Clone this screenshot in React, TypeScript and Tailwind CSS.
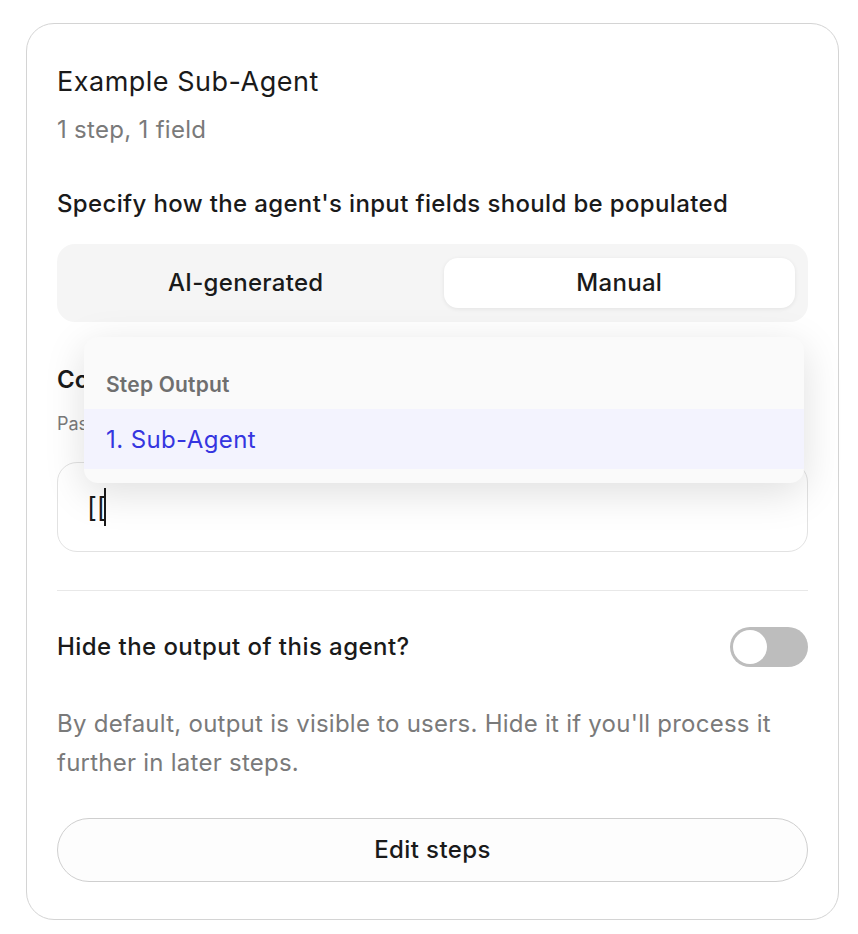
import { useState } from 'react';

export default function App() {
  const [mode, setMode] = useState<'ai' | 'manual'>('manual');
  const [hidden, setHidden] = useState(false);

  return (
    <div className="min-h-screen bg-white pl-[26px] pt-[23px] font-['Inter',sans-serif] text-[#1a1a1a]">
      <div className="w-[813px] rounded-[28px] border border-[#d4d4d4] px-[30px] pb-[37px] pt-[42px]">
        <h2 className="text-[27px] leading-[32px] font-normal tracking-[0.5px]">Example Sub-Agent</h2>
        <p className="mt-[18px] text-[24px] leading-[28px] tracking-[0.3px] text-[#7a7a7a]">1 step, 1 field</p>

        <p className="mt-[46px] text-[24px] leading-[28px] font-medium tracking-[0.35px]">
          Specify how the agent's input fields should be populated
        </p>

        <div className="mt-[26px] flex gap-[22px] rounded-[18px] bg-[#f5f5f5] px-[13px] py-[14px]">
          {[
            { id: 'ai' as const, label: 'AI-generated' },
            { id: 'manual' as const, label: 'Manual' },
          ].map(({ id, label }) => (
            <button
              key={id}
              type="button"
              onClick={() => setMode(id)}
              className={
                mode === id
                  ? 'h-[50px] flex-1 rounded-[14px] bg-white text-[24px] font-medium tracking-[0.3px] shadow-[0_1px_4px_rgba(0,0,0,0.08)]'
                  : 'h-[50px] flex-1 rounded-[14px] text-[24px] font-medium tracking-[0.3px]'
              }
            >
              {label}
            </button>
          ))}
        </div>

        <div className="relative mt-[44px]">
          <p className="text-[24px] leading-[28px] font-semibold">Context</p>
          <p className="mt-[18px] text-[18px] leading-[24px] text-[#7a7a7a]">Pass data from previous steps</p>
          <div className="mt-[26px] flex h-[90px] items-center rounded-[20px] border border-[#e2e2e2] bg-white px-[29px]">
            <span className="text-[27px] leading-none text-[#1a1a1a]">[[</span>
            <span className="-ml-[3px] h-[38px] w-[2px] bg-[#1a1a1a]" />
          </div>

          <div className="absolute left-[27px] top-[-29px] z-10 w-[720px] overflow-hidden rounded-[14px] bg-[#fafafa] pb-[14px] shadow-[0_10px_40px_rgba(0,0,0,0.13)]">
            <p className="px-[22px] pt-[36px] pb-[12px] text-[21px] leading-[24px] font-semibold tracking-[0.2px] text-[#6f6f6f]">
              Step Output
            </p>
            <div className="flex h-[60px] items-center bg-[#f3f3fe] px-[22px] pt-[2px] text-[24px] tracking-[0.4px] text-[#3535e0]">
              1. Sub-Agent
            </div>
          </div>
        </div>

        <div className="mt-[38px] h-px bg-[#e8e8e8]" />

        <div className="mt-[36px] flex items-center justify-between">
          <p className="text-[24px] leading-[28px] font-medium tracking-[0.45px]">Hide the output of this agent?</p>
          <button
            type="button"
            onClick={() => setHidden(!hidden)}
            className={
              hidden
                ? 'flex h-[40px] w-[78px] items-center justify-end rounded-full bg-[#3535e0] p-[3px]'
                : 'flex h-[40px] w-[78px] items-center rounded-full bg-[#bdbdbd] p-[3px]'
            }
          >
            <span className="h-[34px] w-[34px] rounded-full bg-white" />
          </button>
        </div>

        <p className="mt-[37px] text-[24px] leading-[39px] tracking-[0.25px] text-[#7a7a7a]">
          By default, output is visible to users. Hide it if you'll process it further in later steps.
        </p>

        <button
          type="button"
          className="mt-[36px] h-[64px] w-full rounded-full border border-[#cfcfcf] bg-[#fdfdfd] text-[24px] font-medium tracking-[0.4px]"
        >
          Edit steps
        </button>
      </div>
    </div>
  );
}
